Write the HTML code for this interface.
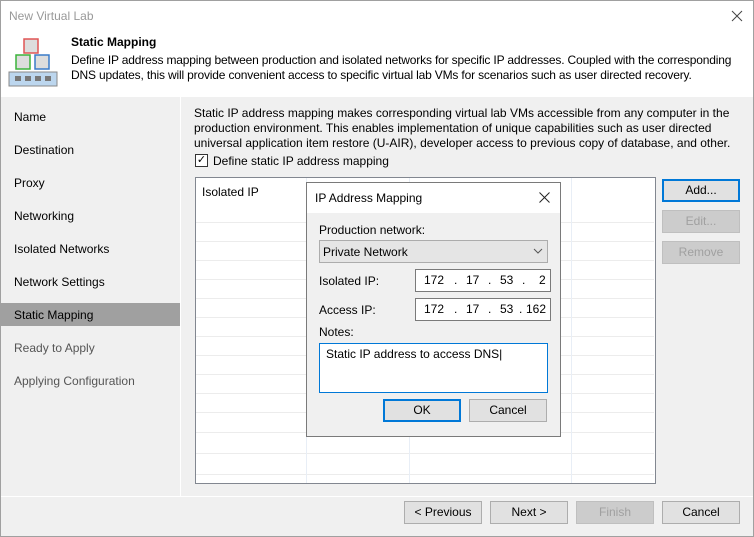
<!DOCTYPE html><html><head><style>
*{box-sizing:border-box;margin:0;padding:0}
body{width:754px;height:537px;position:relative;background:#f0f0f0;font-family:"Liberation Sans",sans-serif;font-size:12px;color:#000;overflow:hidden}
.a{position:absolute}
.btn{position:absolute;height:23px;background:#e1e1e1;border:1px solid #adadad;text-align:center;line-height:21px;font-size:12px}
.dis{background:#cccccc;border-color:#bfbfbf;color:#a0a0a0}
.nav{position:absolute;left:14px;font-size:12px}
.hl{position:absolute;left:196px;width:458px;height:1px;background:#ececec}
.vl{position:absolute;top:178px;width:1px;height:305px;background:#e8eef6}
.ip{position:absolute;left:415px;width:136px;height:23px;background:#fff;border:1px solid #7a7a7a;font-size:12px;line-height:21px}
.ip span{position:absolute}
</style></head><body>
<div class="a" style="left:0;top:0;width:754px;height:537px;border:1px solid #a0a0a0"></div>
<div class="a" style="left:1px;top:1px;width:752px;height:96px;background:#fff"></div>
<div class="a" style="left:9px;top:9px;color:#999;font-size:12px">New Virtual Lab</div>
<svg class="a" style="left:731px;top:10px" width="12" height="12"><path d="M1 1L11 11M11 1L1 11" stroke="#444" stroke-width="1"/></svg>
<svg class="a" style="left:8px;top:38px" width="52" height="50">
<rect x="16" y="1" width="14" height="14" fill="#ddd" stroke="#e05555" stroke-width="1.5"/>
<rect x="8" y="17" width="14" height="14" fill="#ddd" stroke="#3bb33b" stroke-width="1.5"/>
<rect x="27" y="17" width="14" height="14" fill="#ddd" stroke="#3a7bc8" stroke-width="1.5"/>
<rect x="1" y="34" width="48" height="14" fill="#bcd6ee" stroke="#888" stroke-width="1"/>
<g fill="#777"><rect x="7" y="38" width="6" height="5"/><rect x="17" y="38" width="6" height="5"/><rect x="27" y="38" width="6" height="5"/><rect x="37" y="38" width="6" height="5"/></g>
</svg>
<div class="a" style="left:71px;top:35px;font-weight:bold;font-size:12px">Static Mapping</div>
<div class="a" style="left:71px;top:53px;line-height:15px;font-size:12px;white-space:nowrap;letter-spacing:-0.17px">Define IP address mapping between production and isolated networks for specific IP addresses. Coupled with the corresponding<br>DNS updates, this will provide convenient access to specific virtual lab VMs for scenarios such as user directed recovery.</div>
<div class="a" style="left:180px;top:97px;width:1px;height:399px;background:#fff"></div>
<div class="nav" style="top:110px">Name</div>
<div class="nav" style="top:143px">Destination</div>
<div class="nav" style="top:176px">Proxy</div>
<div class="nav" style="top:209px">Networking</div>
<div class="nav" style="top:242px">Isolated Networks</div>
<div class="nav" style="top:275px">Network Settings</div>
<div class="a" style="left:1px;top:303px;width:179px;height:23px;background:#a0a0a0"></div>
<div class="nav" style="top:308px">Static Mapping</div>
<div class="nav" style="top:341px;color:#555">Ready to Apply</div>
<div class="nav" style="top:374px;color:#555">Applying Configuration</div>
<div class="a" style="left:194px;top:106px;line-height:15px;white-space:nowrap">Static IP address mapping makes corresponding virtual lab VMs accessible from any computer in the<br>production environment. This enables implementation of unique capabilities such as user directed<br>universal application item restore (U-AIR), developer access to previous copy of database, and other.</div>
<div class="a" style="left:195px;top:154px;width:13px;height:13px;border:1px solid #333;background:#fff;font-size:11px;line-height:11px;text-align:center">✓</div>
<div class="a" style="left:213px;top:154px">Define static IP address mapping</div>
<div class="a" style="left:195px;top:177px;width:461px;height:307px;background:#fff;border:1px solid #828790"></div>
<div class="hl" style="top:222px"></div><div class="hl" style="top:241px"></div><div class="hl" style="top:260px"></div><div class="hl" style="top:279px"></div><div class="hl" style="top:298px"></div><div class="hl" style="top:317px"></div><div class="hl" style="top:336px"></div><div class="hl" style="top:355px"></div><div class="hl" style="top:374px"></div><div class="hl" style="top:393px"></div><div class="hl" style="top:412px"></div><div class="hl" style="top:432px"></div><div class="hl" style="top:453px"></div><div class="hl" style="top:474px"></div>
<div class="vl" style="left:306px"></div><div class="vl" style="left:409px"></div><div class="vl" style="left:571px"></div>
<div class="a" style="left:202px;top:185px">Isolated IP</div>
<div class="btn" style="left:662px;top:179px;width:78px;border:2px solid #0078d7;line-height:19px">Add...</div>
<div class="btn dis" style="left:662px;top:210px;width:78px">Edit...</div>
<div class="btn dis" style="left:662px;top:241px;width:78px">Remove</div>
<div class="a" style="left:306px;top:182px;width:255px;height:255px;background:#f0f0f0;border:1px solid #7a7a7a"></div>
<div class="a" style="left:307px;top:183px;width:253px;height:30px;background:#fff"></div>
<div class="a" style="left:315px;top:191px">IP Address Mapping</div>
<svg class="a" style="left:539px;top:192px" width="11" height="11"><path d="M0.5 0.5L10.5 10.5M10.5 0.5L0.5 10.5" stroke="#222" stroke-width="1"/></svg>
<div class="a" style="left:319px;top:223px">Production network:</div>
<div class="a" style="left:319px;top:240px;width:229px;height:23px;background:#e5e5e5;border:1px solid #acacac"></div>
<div class="a" style="left:323px;top:245px">Private Network</div>
<svg class="a" style="left:533px;top:247px" width="10" height="8"><path d="M1 2 L5 6 L9 2" fill="none" stroke="#555"/></svg>
<div class="a" style="left:319px;top:274px">Isolated IP:</div>
<div class="ip" style="top:269px"><span style="left:8px">172</span><span style="left:38px">.</span><span style="left:50px">17</span><span style="left:72px">.</span><span style="left:84px">53</span><span style="left:106px">.</span><span style="left:123px">2</span></div>
<div class="a" style="left:319px;top:303px">Access IP:</div>
<div class="ip" style="top:298px"><span style="left:8px">172</span><span style="left:38px">.</span><span style="left:50px">17</span><span style="left:72px">.</span><span style="left:84px">53</span><span style="left:103px">.</span><span style="left:110px">162</span></div>
<div class="a" style="left:319px;top:325px">Notes:</div>
<div class="a" style="left:319px;top:343px;width:229px;height:50px;background:#fff;border:1px solid #0078d7;padding:3px 6px">Static IP address to access DNS|</div>
<div class="btn" style="left:383px;top:399px;width:78px;border:2px solid #0078d7;line-height:19px">OK</div>
<div class="btn" style="left:469px;top:399px;width:78px">Cancel</div>
<div class="a" style="left:1px;top:496px;width:752px;height:1px;background:#fff"></div>
<div class="btn" style="left:404px;top:501px;width:78px">&lt; Previous</div>
<div class="btn" style="left:490px;top:501px;width:78px">Next &gt;</div>
<div class="btn dis" style="left:576px;top:501px;width:78px">Finish</div>
<div class="btn" style="left:662px;top:501px;width:78px">Cancel</div>
</body></html>
